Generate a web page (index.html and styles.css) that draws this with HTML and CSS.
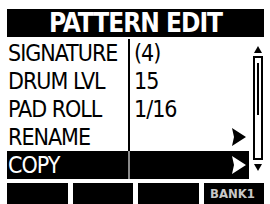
FILE: index.html
```html
<!DOCTYPE html>
<html lang="en">
<head>
  <meta charset="UTF-8" />
  <title>Pattern Edit</title>
  <link rel="stylesheet" href="styles.css">
</head>
<body>

<div class="screen">
  <div class="title">PATTERN EDIT</div>

  <div class="main">
    <div class="menu">
      <div class="row"><span class="label">SIGNATURE</span><span class="value">(4)</span><span class="arrow"></span></div>
      <div class="row"><span class="label">DRUM LVL</span><span class="value">15</span><span class="arrow"></span></div>
      <div class="row"><span class="label">PAD ROLL</span><span class="value">1/16</span><span class="arrow"></span></div>
      <div class="row">
        <span class="label">RENAME</span><span class="value"></span>
        <span class="arrow"><svg width="14" height="18" viewBox="0 0 14 18"><path d="M0 0 L14 9 L0 18 L2 9 Z" fill="#000"/></svg></span>
      </div>
      <div class="row sel">
        <span class="label">COPY</span><span class="value"></span>
        <span class="arrow"><svg width="14" height="18" viewBox="0 0 14 18"><path d="M0 0 L14 9 L0 18 L2 9 Z" fill="#fff"/></svg></span>
      </div>
    </div>

    <!-- scroll bar -->
    <div class="scroll">
      <svg class="up" width="8" height="7" viewBox="0 0 8 7"><path d="M4 0 L8 7 L0 7 Z" fill="#000"/></svg>
      <div class="track"><div class="thumb"></div></div>
      <svg class="down" width="8" height="7" viewBox="0 0 8 7"><path d="M0 0 L8 0 L4 7 Z" fill="#000"/></svg>
    </div>
  </div>

  <div class="keys">
    <div class="key"></div>
    <div class="key"></div>
    <div class="key"></div>
    <div class="key">BANK1</div>
  </div>
</div>

</body>
</html>
```

FILE: styles.css
```css
body {
  margin: 0;
  padding: 0;
  background: white;
  font-family: "DejaVu Sans", sans-serif;
  font-stretch: condensed;
  overflow: hidden;
}

.screen {
  width: 270px;
  height: 204px;
  padding: 9px 6px 0 7px;
  box-sizing: border-box;
}

.title {
  height: 28px;
  background: black;
  color: white;
  font-size: 26px;
  font-weight: bold;
  letter-spacing: -1px;
  line-height: 28px;
  text-align: center;
}

.main {
  display: flex;
  height: 142px;
  margin-top: 2px;
}

.menu {
  width: 245px;
}

.row {
  display: grid;
  grid-template-columns: 121px 1fr 17px;
  height: 28px;
  align-items: center;
  font-size: 23px;
  letter-spacing: -1px;
  color: black;
}

.label {
  padding-left: 1px;
  line-height: 28px;
}

.value {
  border-left: 2px solid black;
  padding-left: 4px;
  line-height: 28px;
  height: 28px;
}

.arrow {
  display: flex;
  align-items: center;
  height: 28px;
}

.arrow svg {
  flex: none;
}

.sel {
  background: black;
  color: white;
}

.sel .value {
  border-left-color: #8a8a8a;
}

.scroll {
  width: 12px;
  margin-left: 3px;
  padding-top: 7px;
  display: flex;
  flex-direction: column;
  align-items: center;
}

.track {
  width: 10px;
  height: 104px;
  margin-top: 3px;
  border: 2px solid black;
  box-sizing: border-box;
  padding: 5px 2px 0 2px;
  background: white;
}

.thumb {
  height: 52px;
  background: black;
}

.down {
  margin-top: 4px;
}

.keys {
  display: flex;
  gap: 5px;
  margin-top: 2px;
}

.key {
  flex: 1;
  height: 24px;
  background: black;
  color: #c8c8c8;
  font-size: 13px;
  font-weight: bold;
  line-height: 22px;
  text-align: right;
  padding-right: 9px;
}
```
